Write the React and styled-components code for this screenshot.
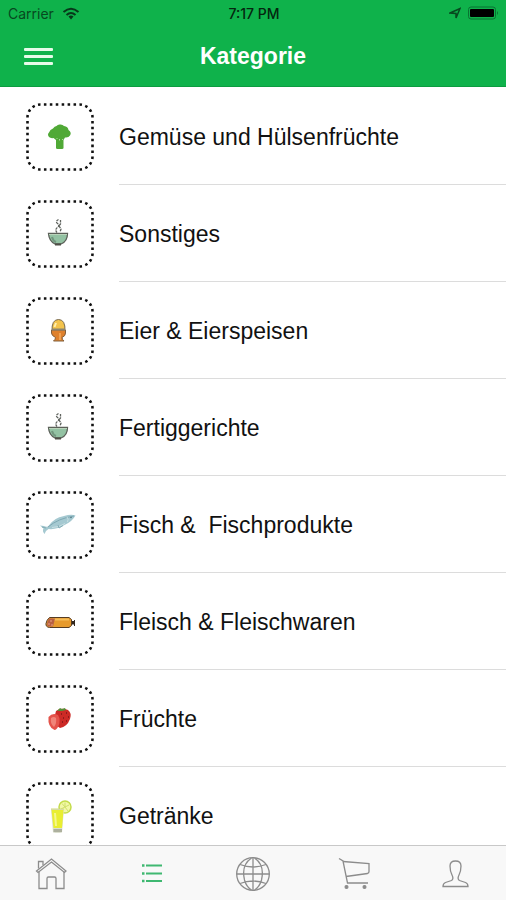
import React, { Component } from 'react';
import styled, { createGlobalStyle } from 'styled-components';

const GlobalStyle = createGlobalStyle`
  * {
    box-sizing: border-box;
  }
  body {
    margin: 0;
    background: #fff;
    font-family: "Liberation Sans", Arial, sans-serif;
  }
  svg {
    display: block;
  }
`;

const Screen = styled.div`
  display: flex;
  flex-direction: column;
  height: 100vh;
  overflow: hidden;
`;

const Header = styled.header`
  flex: none;
  background: #0fb24b;
  border-bottom: 1px solid #0c9c40;
`;

const StatusBar = styled.div`
  display: grid;
  grid-template-columns: 1fr auto 1fr;
  align-items: center;
  height: 26px;
  padding: 0 6px 0 8px;
  color: #07481f;
  font-family: Inter, sans-serif;
  font-size: 14px;
`;

const StatusGroup = styled.div`
  display: flex;
  align-items: center;
  gap: ${({ gap }) => gap}px;
  justify-content: ${({ end }) => (end ? 'flex-end' : 'flex-start')};
`;

const Clock = styled.span`
  color: #04260f;
  font-weight: 500;
`;

const NavBar = styled.div`
  display: grid;
  grid-template-columns: 1fr auto 1fr;
  align-items: center;
  height: 60px;
  padding: 0 24px;
`;

const MenuButton = styled.button`
  display: flex;
  flex-direction: column;
  gap: 4px;
  width: 29px;
  padding: 0;
  border: 0;
  background: none;
  cursor: pointer;
  span {
    height: 3px;
    border-radius: 1px;
    background: #e6fbe9;
  }
`;

const Title = styled.h1`
  margin: 0;
  color: #fff;
  font-size: 23px;
  font-weight: bold;
  line-height: 28px;
`;

const List = styled.ul`
  flex: 1;
  min-height: 0;
  margin: 0;
  padding: 1px 0 0;
  list-style: none;
  overflow-y: auto;
  scrollbar-width: none;
`;

const RowLink = styled.a`
  display: flex;
  align-items: center;
  gap: 25px;
  height: 97px;
  padding-left: 26px;
  color: #111;
  text-decoration: none;
`;

const Label = styled.span`
  display: flex;
  flex: 1;
  align-items: center;
  height: 100%;
  padding-top: 2px;
  border-bottom: 1px solid #dcdcdc;
  font-size: 23px;
  line-height: 28px;
  white-space: pre;
`;

const TabBar = styled.nav`
  display: flex;
  flex: none;
  height: 55px;
  padding-top: 2px;
  background: #f8f8f8;
  border-top: 1px solid #c8c8c8;
`;

const Tab = styled.a`
  display: flex;
  flex: 1;
  align-items: center;
  justify-content: center;
  color: ${({ active }) => (active ? '#3fb871' : '#8c8c8c')};
`;

const FoodSvg = styled.svg`
  flex: none;
  width: 68px;
  height: 68px;
`;

// 40 dots around the frame, a food drawn on the 40x40 canvas in its middle
const Food = ({ children }) => (
  <FoodSvg viewBox="-14 -14 68 68" aria-hidden="true">
    <rect
      x="-12.500"
      y="-12.500"
      width="65"
      height="65"
      rx="13"
      pathLength="40"
      fill="none"
      stroke="#111"
      strokeWidth="2.600"
      strokeDasharray=".43 .57"
      strokeDashoffset="-.57"
    />
    {children}
  </FoodSvg>
);

const Broccoli = () => (
  <Food>
    <path
      d="M19.500 7.500q3-.5 4.500 1.500q4 .5 4.500 4q3.500 2.500 1.500 5.500q-1.500 2.500-5 2l-1.500 2.500V31q0 1-1.500 1h-4.500q-1.500 0-1.500-1V23l-2.500-2q-3 .5-4.500-1q-2-2.500 0-4.500q1-3 4-4q1.500-2.500 3.500-2.500q1-1.500 3-1.500z"
      fill="#50a936"
    />
    <path d="M16.500 21.500h1m2 .5v1.500m2.500-1h1" stroke="#a9d69a" fill="none" />
  </Food>
);

const Bowl = () => (
  <Food>
    <path
      d="M18.500 5.500q-3.500 2-1 4t0 4q-3 2-.5 5M20.500 6v4l-1.500 2l2 3l-1 3"
      stroke="#5f635e"
      strokeWidth="1.300"
      strokeDasharray="2.500 .8"
      fill="none"
    />
    <path d="M8.500 19.500h19q0 8-6.500 10.500h-6q-6-3-6.500-10.500z" fill="#93c2a3" stroke="#5b5f58" strokeWidth="1.300" />
    <path d="M9 20.500h18" stroke="#b9d3ba" />
    <path d="M12 23q1 4 4 5" stroke="#72967e" strokeWidth="2" fill="none" />
    <path d="M15 30.500h6" stroke="#4f4f46" strokeWidth="2" />
  </Food>
);

const Egg = () => (
  <Food>
    <path d="M12 20Q11.500 8.500 18.500 8.500T25 20z" fill="#f3c34c" stroke="#77684a" />
    <path d="M16 12l-1.500 4" stroke="#fff0b0" strokeWidth="2" />
    <path
      d="M11.500 19h14v3q0 3-3.500 4.500q0 2 2 3.500H13.500q2-1.500 2-3.500q-4-2-4-4.500z"
      fill="#df812d"
      stroke="#81603d"
    />
    <path d="M12 18.500h13" stroke="#8b8470" strokeWidth="2" />
    <path d="M20 22v7" stroke="#f2a252" strokeWidth="2" />
  </Food>
);

const Fish = () => (
  <Food>
    <path
      d="M0 20.500l4 .5q2 1 4 .5Q14 12.500 24 11q7-2 11.500-.5q-3 5.500-10 9q-9 5.500-17 4.500q-3 1.500-4 5q-2.500-3-1-5.500z"
      fill="#a5c9d1"
    />
    <path d="M8 22Q18 13.500 34 11" stroke="#7fa9b4" fill="none" />
    <path d="M12 22.500q7 0 13-4M27 12q2 2 .5 5" stroke="#c8dfe3" fill="none" />
    <path d="M18 20l1 3l4-2.500M2 22l4 1" stroke="#83adb6" fill="none" />
    <circle cx="31" cy="12.500" r=".8" fill="#4e747e" />
  </Food>
);

const Sausage = () => (
  <Food>
    <path d="M9.500 15.500H29l2.500 2v6l-2.500 2H9.500Q5.500 25 6 21.500T9.500 15.500z" fill="#e79a2c" stroke="#563c22" />
    <path d="M13 17.500h16" stroke="#f5bd58" strokeWidth="2" />
    <path d="M9 16.500h6l-2 8H7.500q-1-4 1.500-8z" fill="#b86042" />
    <path d="M8 22h2m0-3h2m-1 4h2" stroke="#e8a084" />
    <path d="M32 19h2v-1h1v6h-1v-1.500h-2z" fill="#34291f" />
  </Food>
);

const Strawberry = () => (
  <Food>
    <path d="M16 12q5-4 12-1q4 3 2 9q-3 8-10 9q-6-3-6-9z" fill="#cd2a26" />
    <path d="M8.500 18q4-5 9.500-2q3 5 .500 11q-2 4-4 4q-7-3-6-13z" fill="#e4534a" />
    <path d="M11 19q3-2 5 0q1 5-2 9q-4-3-3-9z" fill="#f08579" />
    <path d="M17 12l3-3l2 1l3-1l1 2l-4 1z" fill="#568f38" />
    <path d="M21 15h1m4-1h1m-4 5h1m4-1h1m-7 5h1m3-1h1" stroke="#7d1618" strokeWidth="1.500" />
  </Food>
);

const Lemonade = () => (
  <Food>
    <circle cx="25" cy="11" r="6" fill="#f2f8a6" stroke="#c4dc4a" strokeWidth="1.500" />
    <path d="M25 11V6.500M25 11l4-2M25 11l3 4M25 11l-4 2M25 11l-3-3.500" stroke="#cfe06a" />
    <path d="M11 13h13l-2 23.500q-4 1-9 0z" fill="#dcdfcf" />
    <path d="M11.500 14h12L22 32h-8.500z" fill="#e9ee32" />
    <path d="M11 13h13" stroke="#d0d878" />
    <path d="M15 17l1 13" stroke="#f5f88c" strokeWidth="2" />
    <path d="M13.500 34.500h8.500" stroke="#adb09e" strokeWidth="3" />
  </Food>
);

const TabIcon = ({ children }) => (
  <svg
    width="36"
    height="36"
    viewBox="0 0 36 36"
    fill="none"
    stroke="currentColor"
    strokeWidth="1.300"
    aria-hidden="true"
  >
    {children}
  </svg>
);

const HomeIcon = () => (
  <TabIcon>
    <path d="M3.500 15L18.500 3L33 15l-1.500 1.500L18.500 6L5 16.500z" />
    <path d="M6 15.500V32.500h8V22.500q0-1.500 1.500-1.500h6q1.500 0 1.500 1.500v10h8V15.500" />
    <path d="M5.500 12.500v-7h4.500V9" />
  </TabIcon>
);

const ListIcon = () => (
  <TabIcon>
    <path d="M12 9.500h16M12 17.500h16M12 25h16" strokeWidth="1.800" />
    <path d="M8 9.500h2.500M8 17.500h2.500M8 25h2.500" strokeWidth="2.500" />
  </TabIcon>
);

const GlobeIcon = () => (
  <TabIcon>
    <circle cx="18" cy="18" r="16.300" />
    <path d="M18 1.500v33M1.500 18h33M5 8.500q13 5 26 0M5 27.500q13-5 26 0" />
    <path d="M16.500 2Q6 9 9.500 24q2 7 7 10M19.500 2Q30 9 26.500 24q-2 7-7 10" />
  </TabIcon>
);

const CartIcon = () => (
  <TabIcon>
    <path d="M3 2.500l4 2.500l4.500 22h20.500" />
    <path d="M7 5.500l26 2V15.500q0 1.500-1.500 2L10 20.500" />
    <circle cx="10.500" cy="31" r="1.400" fill="currentColor" />
    <circle cx="28.500" cy="31" r="1.400" fill="currentColor" />
  </TabIcon>
);

const PersonIcon = () => (
  <TabIcon>
    <path d="M18.500 5q-5.500 0-5.500 5q0 5 2 9q2 4-.5 5.500l-6 2Q6 27.500 6 30.500h25q0-3-2.500-4l-6-2q-2.500-1.500-.5-5.500q2-4 2-9q0-5-5.500-5z" />
  </TabIcon>
);

const WifiIcon = () => (
  <svg width="18" height="13" viewBox="0 0 18 13" fill="none" stroke="#07371a" strokeWidth="2" aria-hidden="true">
    <path d="M1.500 5Q9-1.500 16.500 5M4.500 8Q9 4 13.500 8" />
    <path d="M9 12.500l-2.500-3q2.500-2 5 0z" fill="#07371a" stroke="none" />
  </svg>
);

const LocationIcon = () => (
  <svg width="12" height="12" viewBox="0 0 12 12" fill="none" stroke="#07481f" strokeWidth="1.500" aria-hidden="true">
    <path d="M1 6l10-4.500L7 11V6.500z" />
  </svg>
);

const BatteryIcon = () => (
  <svg width="32" height="14" viewBox="0 0 32 14" aria-hidden="true">
    <rect x=".5" y="1" width="27" height="12" rx="2.500" fill="none" stroke="#087332" />
    <rect x="2" y="3" width="24" height="8" rx="1" fill="#000" />
    <path d="M29 5q2 2 0 4z" fill="#087332" />
  </svg>
);

const categories = [
  { id: 'gemuese', name: 'Gemüse und Hülsenfrüchte', Icon: Broccoli },
  { id: 'sonstiges', name: 'Sonstiges', Icon: Bowl },
  { id: 'eier', name: 'Eier & Eierspeisen', Icon: Egg },
  { id: 'fertiggerichte', name: 'Fertiggerichte', Icon: Bowl },
  { id: 'fisch', name: 'Fisch &  Fischprodukte', Icon: Fish },
  { id: 'fleisch', name: 'Fleisch & Fleischwaren', Icon: Sausage },
  { id: 'fruechte', name: 'Früchte', Icon: Strawberry },
  { id: 'getraenke', name: 'Getränke', Icon: Lemonade }
];

const tabs = [
  { id: 'home', title: 'Start', Icon: HomeIcon },
  { id: 'categories', title: 'Kategorie', Icon: ListIcon },
  { id: 'web', title: 'Web', Icon: GlobeIcon },
  { id: 'cart', title: 'Einkaufswagen', Icon: CartIcon },
  { id: 'profile', title: 'Profil', Icon: PersonIcon }
];

class App extends Component {
  state = {
    activeTab: 'categories'
  };

  handleTab = (e, id) => {
    e.preventDefault();
    this.setState({ activeTab: id });
  };

  render() {
    const { activeTab } = this.state;
    return (
      <Screen>
        <GlobalStyle />
        <Header>
          <StatusBar>
            <StatusGroup gap={8}>
              <span>Carrier</span>
              <WifiIcon />
            </StatusGroup>
            <Clock>7:17 PM</Clock>
            <StatusGroup gap={7} end>
              <LocationIcon />
              <BatteryIcon />
            </StatusGroup>
          </StatusBar>
          <NavBar>
            <MenuButton type="button" aria-label="Menü">
              <span />
              <span />
              <span />
            </MenuButton>
            <Title>Kategorie</Title>
          </NavBar>
        </Header>
        <List>
          {categories.map(({ id, name, Icon }) => (
            <li key={id}>
              <RowLink href={`#${id}`}>
                <Icon />
                <Label>{name}</Label>
              </RowLink>
            </li>
          ))}
        </List>
        <TabBar>
          {tabs.map(({ id, title, Icon }) => (
            <Tab
              key={id}
              href={`#${id}`}
              aria-label={title}
              active={activeTab === id ? 1 : undefined}
              onClick={(e) => this.handleTab(e, id)}
            >
              <Icon />
            </Tab>
          ))}
        </TabBar>
      </Screen>
    );
  }
}

export default App;
